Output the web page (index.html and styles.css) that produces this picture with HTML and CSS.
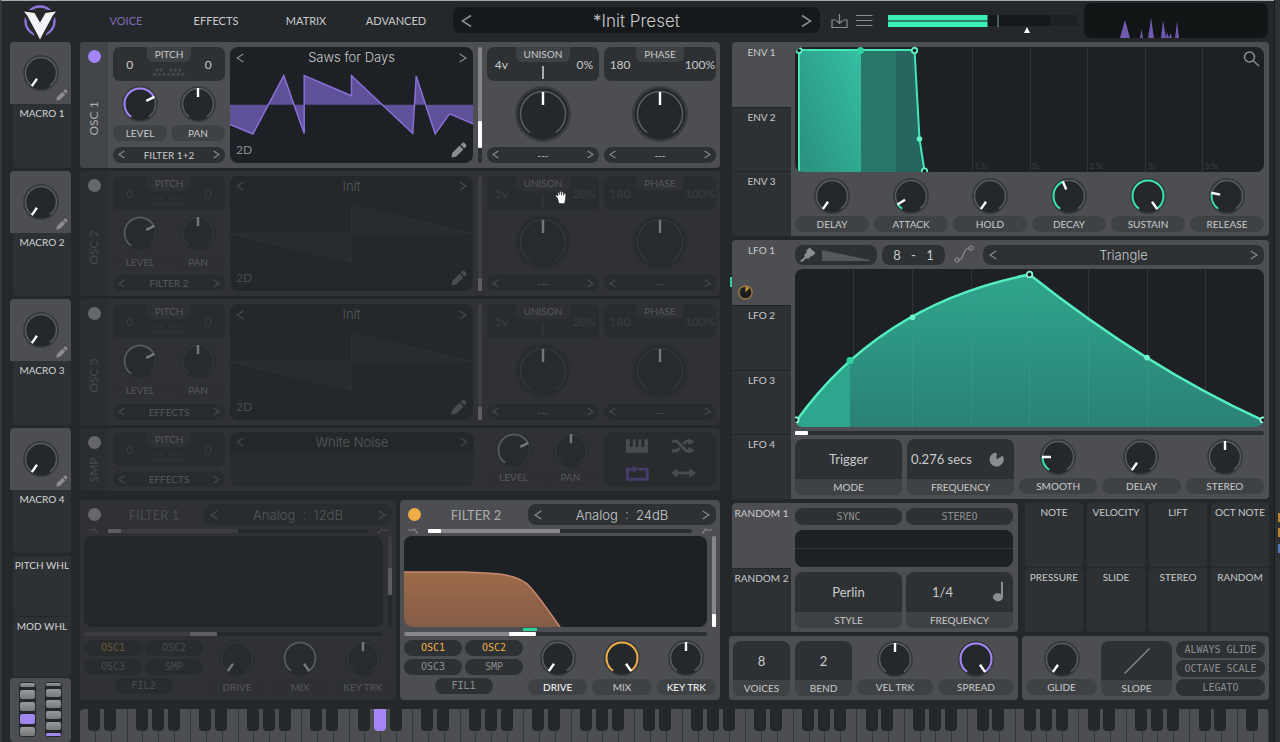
FILE: index.html
```html
<!DOCTYPE html>
<html lang="en">
<head>
<meta charset="utf-8">
<title>Synth – Init Preset</title>
<link rel="stylesheet" href="styles.css">
</head>
<body>
<svg class="defs" aria-hidden="true">
  <defs>
    <symbol id="dial" viewBox="0 0 36 36">
      <circle class="d-halo" cx="18" cy="18" r="18"/>
      <circle class="d-disc" cx="18" cy="18" r="16.500"/>
      <path class="d-ring" d="M9.100 30.700A15.500 15.500 0 1 1 26.900 30.700"/>
      <path class="d-fill" pathLength="100" d="M9.100 30.700A15.500 15.500 0 1 1 26.900 30.700"/>
      <g class="d-hand"><path d="M18 2V11"/></g>
    </symbol>
    <symbol id="dial-big" viewBox="0 0 56 56">
      <circle class="d-halo" cx="28" cy="28" r="28"/>
      <circle class="d-disc" cx="28" cy="28" r="25.500"/>
      <path class="d-ring" d="M15.100 46.400A22.500 22.500 0 1 1 40.900 46.400"/>
      <path class="d-hand-big" d="M28 6V19"/>
    </symbol>
    <symbol id="prev" viewBox="0 0 8 10"><path class="line" d="M7.300 1L1 5L7.300 9"/></symbol>
    <symbol id="next" viewBox="0 0 8 10"><path class="line" d="M.700 1L7 5L.700 9"/></symbol>
    <symbol id="pencil" viewBox="0 0 16 16"><path class="solid" d="M.500 15.500L1.200 11L8.600 3.600L12.400 7.400L5 14.800ZM9.600 2.600L11.600.800Q12.600.200 13.500 1L15 2.500Q15.800 3.500 15.200 4.400L13.400 6.400Z"/></symbol>
    <symbol id="keys" viewBox="0 0 34 9"><g class="solid"><circle cx="5" cy="2" r="1.700"/><circle cx="9" cy="2" r="1.700"/><circle cx="19" cy="2" r="1.700"/><circle cx="23.500" cy="2" r="1.700"/><circle cx="28" cy="2" r="1.700"/><circle cx="2.500" cy="6.500" r="1.700"/><circle cx="7.200" cy="6.500" r="1.700"/><circle cx="12" cy="6.500" r="1.700"/><circle cx="16.800" cy="6.500" r="1.700"/><circle cx="21.500" cy="6.500" r="1.700"/><circle cx="26.300" cy="6.500" r="1.700"/><circle cx="31" cy="6.500" r="1.700"/></g></symbol>
    <linearGradient id="env-a" x1="0" x2="1" y1=".8" y2="0"><stop offset="0" stop-color="#2b9380"/><stop offset="1" stop-color="#35bfa2"/></linearGradient>
    <linearGradient id="lfo-fill" x1="0" x2="0" y1="0" y2="1"><stop offset="0" stop-color="#2fa58c"/><stop offset="1" stop-color="#2a8175"/></linearGradient>
    <linearGradient id="filter-fill" x1="0" x2="0" y1="0" y2="1"><stop offset="0" stop-color="#9d6b48"/><stop offset="1" stop-color="#855c46"/></linearGradient>
  </defs>
</svg>

<div class="app">
  <header class="topbar">
    <svg class="logo" viewBox="0 0 36 36" role="img" aria-label="Vital">
      <circle cx="18" cy="17" r="14.500" fill="none" stroke="#8f72d8" stroke-width="2.400"/>
      <path d="M0 6H13L18 16L23 6H36L32 15L21 36H15L4 15Z" fill="#24282b"/>
      <path d="M2 7.500L12.500 9L18 18.500L23.500 9L34 7.500L30.500 12L19.500 32.500L18 35.500L16.500 32.500L5.500 12Z" fill="#f4f4f6"/>
    </svg>
    <nav class="tabs">
      <a class="tab is-active" href="#voice">VOICE</a>
      <a class="tab" href="#effects">EFFECTS</a>
      <a class="tab" href="#matrix">MATRIX</a>
      <a class="tab" href="#advanced">ADVANCED</a>
    </nav>
    <div class="preset">
      <button aria-label="Previous preset"><svg><use href="#prev"/></svg></button>
      <span>*Init Preset</span>
      <button aria-label="Next preset"><svg><use href="#next"/></svg></button>
    </div>
    <button class="icon-btn" aria-label="Save preset"><svg viewBox="0 0 17 15"><path class="line" d="M5 6H1V13.500H16V6H12M8.500 0V9.500M5.500 6.500L8.500 9.500L11.500 6.500"/></svg></button>
    <button class="icon-btn menu" aria-label="Menu"><svg viewBox="0 0 17 12"><path class="line" d="M0 1H16.500M0 6H16.500M0 11H16.500"/></svg></button>
    <div class="meter">
      <svg viewBox="0 0 190 22" preserveAspectRatio="none" aria-label="Output level">
        <path d="M0 0H162V11H0Z" fill="#14181a"/><path d="M162 0H190V11H162Z" fill="#1d2124"/>
        <path d="M0 0H99.500V5.500H0ZM0 6.500H99.500V12H0Z" fill="#3cf0b6"/>
        <path d="M110 0V12" stroke="#6fa295"/>
        <path d="M139 12L142 18H136Z" fill="#fff"/>
      </svg>
    </div>
    <svg class="spectrum" viewBox="0 0 184 35" aria-label="Spectrum">
      <path d="M36 35Q40 20 41 17Q42 20 46 35ZM56 35L57.500 26L59 35ZM64 35Q66.500 20 67 14Q68 22 70 35ZM77 35L79 17L82 35ZM82 35L83 29L85 35L86.500 30L88 35ZM91 35L93 18L95 35Z" fill="#7059ae"/>
    </svg>
  </header>

  <aside class="macros">
    <section class="macro">
      <label class="macro-top"><span class="dial" style="--v:0"><svg><use href="#dial"/></svg><input type="range" value="0" aria-label="Macro 1"></span><svg class="pencil"><use href="#pencil"/></svg></label>
      <div class="macro-name">MACRO 1</div>
    </section>
    <section class="macro">
      <label class="macro-top"><span class="dial" style="--v:0"><svg><use href="#dial"/></svg><input type="range" value="0" aria-label="Macro 2"></span><svg class="pencil"><use href="#pencil"/></svg></label>
      <div class="macro-name">MACRO 2</div>
    </section>
    <section class="macro">
      <label class="macro-top"><span class="dial" style="--v:0"><svg><use href="#dial"/></svg><input type="range" value="0" aria-label="Macro 3"></span><svg class="pencil"><use href="#pencil"/></svg></label>
      <div class="macro-name">MACRO 3</div>
    </section>
    <section class="macro">
      <label class="macro-top"><span class="dial" style="--v:0"><svg><use href="#dial"/></svg><input type="range" value="0" aria-label="Macro 4"></span><svg class="pencil"><use href="#pencil"/></svg></label>
      <div class="macro-name">MACRO 4</div>
    </section>
    <div class="wheel-name">PITCH WHL</div>
    <div class="wheel-name">MOD WHL</div>
    <div class="wheels">
      <div class="wheel"><i class="w1"></i><i class="w2"></i><i class="w2"></i><i class="w2 lit"></i><i class="w2"></i></div>
      <div class="wheel"><i class="w1"></i><i class="w2"></i><i class="w2"></i><i class="w2"></i><i class="w2"></i><i class="w1 lit"></i></div>
    </div>
  </aside>

  <main class="work">
    <div class="voice">
      <div class="oscs">
        <section class="osc">
          <header class="osc-head"><button class="power" aria-label="Oscillator 1 on" aria-pressed="true"></button><h2>OSC 1</h2></header>
          <div class="osc-col">
            <div class="duo"><span>0</span><b>PITCH</b><span>0</span><svg class="keys"><use href="#keys"/></svg></div>
            <div class="pair">
              <label class="knob"><span class="dial" style="--v:72;--f:72"><svg><use href="#dial"/></svg><input type="range" value="72"></span><span class="cap">LEVEL</span></label>
              <label class="knob"><span class="dial" style="--v:50"><svg><use href="#dial"/></svg><input type="range" value="50"></span><span class="cap">PAN</span></label>
            </div>
            <div class="picker"><button aria-label="Previous"><svg><use href="#prev"/></svg></button><span>FILTER 1+2</span><button aria-label="Next"><svg><use href="#next"/></svg></button></div>
          </div>
          <div class="wave">
            <svg class="plot" viewBox="0 0 244 115" preserveAspectRatio="none">
              <path d="M0 57.500V77L23 86.500L54 28.500L74.500 86V28.500L122 48.500V28.500L183.500 86L187 29L206 86.500L220.500 66.500L244 76.500V57.500Z" fill="#5f509a"/>
              <path d="M0 77L23 86.500L54 28.500L74.500 86V28.500L122 48.500V28.500L183.500 86L187 29L206 86.500L220.500 66.500L244 76.500" fill="none" stroke="#8a70d6" stroke-width="1.500"/>
            </svg>
            <div class="wave-title"><button aria-label="Previous wavetable"><svg><use href="#prev"/></svg></button><span>Saws for Days</span><button aria-label="Next wavetable"><svg><use href="#next"/></svg></button></div>
            <div class="wave-foot"><button>2D</button><button aria-label="Edit wavetable"><svg class="edit"><use href="#pencil"/></svg></button></div>
          </div>
          <input class="vslider long" type="range" value="17" style="--p:75%" aria-label="Wave frame">
          <div class="osc-col">
            <div class="duo"><span>4v</span><b>UNISON</b><span>0%</span><i class="tick"></i></div>
            <span class="dial big"><svg><use href="#dial-big"/></svg><input type="range" value="50" aria-label="Unison morph"></span>
            <div class="picker"><button aria-label="Previous"><svg><use href="#prev"/></svg></button><span>---</span><button aria-label="Next"><svg><use href="#next"/></svg></button></div>
          </div>
          <div class="osc-col">
            <div class="duo"><span>180</span><b>PHASE</b><span>100%</span></div>
            <span class="dial big"><svg><use href="#dial-big"/></svg><input type="range" value="50" aria-label="Phase morph"></span>
            <div class="picker"><button aria-label="Previous"><svg><use href="#prev"/></svg></button><span>---</span><button aria-label="Next"><svg><use href="#next"/></svg></button></div>
          </div>
        </section>

        <section class="osc off">
          <header class="osc-head"><button class="power" aria-label="Oscillator 2 on" aria-pressed="false"></button><h2>OSC 2</h2></header>
          <div class="osc-col">
            <div class="duo"><span>0</span><b>PITCH</b><span>0</span><svg class="keys"><use href="#keys"/></svg></div>
            <div class="pair">
              <label class="knob"><span class="dial" style="--v:72;--f:72"><svg><use href="#dial"/></svg><input type="range" value="72"></span><span class="cap">LEVEL</span></label>
              <label class="knob"><span class="dial" style="--v:50"><svg><use href="#dial"/></svg><input type="range" value="50"></span><span class="cap">PAN</span></label>
            </div>
            <div class="picker"><button aria-label="Previous"><svg><use href="#prev"/></svg></button><span>FILTER 2</span><button aria-label="Next"><svg><use href="#next"/></svg></button></div>
          </div>
          <div class="wave">
            <svg class="plot" viewBox="0 0 244 115" preserveAspectRatio="none"><path d="M0 57.500L122 86V29L244 57.500Z" fill="#282c2f" stroke="#2d3033"/></svg>
            <div class="wave-title"><button aria-label="Previous wavetable"><svg><use href="#prev"/></svg></button><span>Init</span><button aria-label="Next wavetable"><svg><use href="#next"/></svg></button></div>
            <div class="wave-foot"><button>2D</button><button aria-label="Edit wavetable"><svg class="edit"><use href="#pencil"/></svg></button></div>
          </div>
          <input class="vslider" type="range" value="0" style="--p:95%" aria-label="Wave frame">
          <div class="osc-col">
            <div class="duo"><span>1v</span><b>UNISON</b><span>20%</span><i class="tick"></i>
              <svg class="grab" viewBox="0 0 12 13"><path d="M2.500 7L1 5.500Q.200 4.700.900 4.200Q1.600 3.800 3 5V2.200Q3 1.300 3.700 1.300Q4.400 1.300 4.500 2.200L4.700 4V1.200Q4.700.300 5.500.300Q6.300.300 6.400 1.200L6.500 4L7 1.500Q7.200.700 8 .900Q8.700 1 8.600 2L8.400 4.500L9.300 2.800Q9.900 2.100 10.500 2.500Q11 2.900 10.800 3.800L10.300 9L9.500 12.500H4Z" fill="#fff" stroke="#222" stroke-width=".500"/></svg>
            </div>
            <span class="dial big"><svg><use href="#dial-big"/></svg><input type="range" value="50" aria-label="Unison morph"></span>
            <div class="picker"><button aria-label="Previous"><svg><use href="#prev"/></svg></button><span>---</span><button aria-label="Next"><svg><use href="#next"/></svg></button></div>
          </div>
          <div class="osc-col">
            <div class="duo"><span>180</span><b>PHASE</b><span>100%</span></div>
            <span class="dial big"><svg><use href="#dial-big"/></svg><input type="range" value="50" aria-label="Phase morph"></span>
            <div class="picker"><button aria-label="Previous"><svg><use href="#prev"/></svg></button><span>---</span><button aria-label="Next"><svg><use href="#next"/></svg></button></div>
          </div>
        </section>

        <section class="osc off">
          <header class="osc-head"><button class="power" aria-label="Oscillator 3 on" aria-pressed="false"></button><h2>OSC 3</h2></header>
          <div class="osc-col">
            <div class="duo"><span>0</span><b>PITCH</b><span>0</span><svg class="keys"><use href="#keys"/></svg></div>
            <div class="pair">
              <label class="knob"><span class="dial" style="--v:72;--f:72"><svg><use href="#dial"/></svg><input type="range" value="72"></span><span class="cap">LEVEL</span></label>
              <label class="knob"><span class="dial" style="--v:50"><svg><use href="#dial"/></svg><input type="range" value="50"></span><span class="cap">PAN</span></label>
            </div>
            <div class="picker"><button aria-label="Previous"><svg><use href="#prev"/></svg></button><span>EFFECTS</span><button aria-label="Next"><svg><use href="#next"/></svg></button></div>
          </div>
          <div class="wave">
            <svg class="plot" viewBox="0 0 244 115" preserveAspectRatio="none"><path d="M0 57.500L122 86V29L244 57.500Z" fill="#282c2f" stroke="#2d3033"/></svg>
            <div class="wave-title"><button aria-label="Previous wavetable"><svg><use href="#prev"/></svg></button><span>Init</span><button aria-label="Next wavetable"><svg><use href="#next"/></svg></button></div>
            <div class="wave-foot"><button>2D</button><button aria-label="Edit wavetable"><svg class="edit"><use href="#pencil"/></svg></button></div>
          </div>
          <input class="vslider" type="range" value="0" style="--p:95%" aria-label="Wave frame">
          <div class="osc-col">
            <div class="duo"><span>1v</span><b>UNISON</b><span>20%</span><i class="tick"></i></div>
            <span class="dial big"><svg><use href="#dial-big"/></svg><input type="range" value="50" aria-label="Unison morph"></span>
            <div class="picker"><button aria-label="Previous"><svg><use href="#prev"/></svg></button><span>---</span><button aria-label="Next"><svg><use href="#next"/></svg></button></div>
          </div>
          <div class="osc-col">
            <div class="duo"><span>180</span><b>PHASE</b><span>100%</span></div>
            <span class="dial big"><svg><use href="#dial-big"/></svg><input type="range" value="50" aria-label="Phase morph"></span>
            <div class="picker"><button aria-label="Previous"><svg><use href="#prev"/></svg></button><span>---</span><button aria-label="Next"><svg><use href="#next"/></svg></button></div>
          </div>
        </section>

        <section class="osc smp off">
          <header class="osc-head"><button class="power" aria-label="Sampler on" aria-pressed="false"></button><h2>SMP</h2></header>
          <div class="osc-col">
            <div class="duo"><span>0</span><b>PITCH</b><span>0</span><svg class="keys"><use href="#keys"/></svg></div>
            <div class="picker"><button aria-label="Previous"><svg><use href="#prev"/></svg></button><span>EFFECTS</span><button aria-label="Next"><svg><use href="#next"/></svg></button></div>
          </div>
          <div class="wave noise">
            <div class="wave-title"><button aria-label="Previous sample"><svg><use href="#prev"/></svg></button><span>White Noise</span><button aria-label="Next sample"><svg><use href="#next"/></svg></button></div>
          </div>
          <div class="pair smp-knobs">
            <label class="knob"><span class="dial" style="--v:72;--f:72"><svg><use href="#dial"/></svg><input type="range" value="72"></span><span class="cap">LEVEL</span></label>
            <label class="knob"><span class="dial" style="--v:50"><svg><use href="#dial"/></svg><input type="range" value="50"></span><span class="cap">PAN</span></label>
          </div>
          <div class="smp-modes">
            <button aria-label="Key track"><svg viewBox="0 0 26 16"><path class="solid" d="M1 1H5V9H8V1H11V9H14V1H17V9H20V1H24V15H1Z"/></svg></button>
            <button aria-label="Random phase"><svg viewBox="0 0 26 16"><path class="thick" d="M1 3H6L16 13H20M1 13H6L9 10M13 6L16 3H20"/><path class="solid" d="M18 0L25 3.500L18 7ZM18 9L25 12.500L18 16Z"/></svg></button>
            <button aria-label="Loop" aria-pressed="true"><svg viewBox="0 0 26 16"><path class="thick" d="M8 4H2.500V14.500H23V4H14"/><path class="solid" d="M8 0L14 4L8 8Z"/></svg></button>
            <button aria-label="Bounce"><svg viewBox="0 0 26 16"><path class="thick" d="M4 8H22"/><path class="solid" d="M7 3V13L0 8ZM19 3V13L26 8Z"/></svg></button>
          </div>
        </section>
      </div>

      <div class="filters">
        <section class="filter off">
          <header class="filter-head"><button class="power" aria-label="Filter 1 on" aria-pressed="false"></button><h2>FILTER 1</h2>
            <div class="picker wide"><button aria-label="Previous model"><svg><use href="#prev"/></svg></button><span>Analog&nbsp; :&nbsp; 12dB</span><button aria-label="Next model"><svg><use href="#next"/></svg></button></div>
          </header>
          <div class="blend"><svg viewBox="0 0 10 6"><path class="line" d="M0 2H5L6.500 1L9.500 5.500"/></svg><input class="hslider" type="range" value="0" style="--p:50%" aria-label="Blend"><svg viewBox="0 0 10 6"><path class="line" d="M10 2H5L3.500 1L.500 5.500"/></svg></div>
          <div class="response"><div class="screen"></div><input class="vslider fat mid" type="range" value="50" style="--p:45%" aria-label="Resonance"></div>
          <div class="cutoff"><input class="hslider cut" type="range" value="39" style="--p:40%" aria-label="Cutoff"></div>
          <div class="filter-foot">
            <div class="routes"><button aria-pressed="true">OSC1</button><button>OSC2</button><button>OSC3</button><button>SMP</button><button>FIL2</button></div>
            <label class="knob"><span class="dial" style="--v:0"><svg><use href="#dial"/></svg><input type="range" value="0"></span><span class="cap">DRIVE</span></label>
            <label class="knob"><span class="dial" style="--v:100;--f:100"><svg><use href="#dial"/></svg><input type="range" value="100"></span><span class="cap">MIX</span></label>
            <label class="knob"><span class="dial" style="--v:50"><svg><use href="#dial"/></svg><input type="range" value="50"></span><span class="cap">KEY TRK</span></label>
          </div>
        </section>
        <section class="filter">
          <header class="filter-head"><button class="power" aria-label="Filter 2 on" aria-pressed="true"></button><h2>FILTER 2</h2>
            <div class="picker wide"><button aria-label="Previous model"><svg><use href="#prev"/></svg></button><span>Analog&nbsp; :&nbsp; 24dB</span><button aria-label="Next model"><svg><use href="#next"/></svg></button></div>
          </header>
          <div class="blend"><svg viewBox="0 0 10 6"><path class="line" d="M0 2H5L6.500 1L9.500 5.500"/></svg><input class="hslider" type="range" value="0" style="--p:50%" aria-label="Blend"><svg viewBox="0 0 10 6"><path class="line" d="M10 2H5L3.500 1L.500 5.500"/></svg></div>
          <div class="response">
            <div class="screen"><svg class="plot" viewBox="0 0 303 91" preserveAspectRatio="none">
              <path d="M0 36H60C90 37 108 37 122.700 47.500C132 56 142 71 156 91H0Z" fill="url(#filter-fill)"/>
              <path d="M0 36H60C90 37 108 37 122.700 47.500C132 56 142 71 156 91" fill="none" stroke="#c98a72" stroke-width="1.500"/></svg></div>
            <input class="vslider fat" type="range" value="0" style="--p:90%" aria-label="Resonance">
          </div>
          <div class="cutoff"><input class="hslider cut" type="range" value="38" style="--p:38%" aria-label="Cutoff"><i class="mod-mark"></i></div>
          <div class="filter-foot">
            <div class="routes"><button aria-pressed="true">OSC1</button><button aria-pressed="true">OSC2</button><button>OSC3</button><button>SMP</button><button>FIL1</button></div>
            <label class="knob strong"><span class="dial" style="--v:0"><svg><use href="#dial"/></svg><input type="range" value="0"></span><span class="cap">DRIVE</span></label>
            <label class="knob"><span class="dial amber" style="--v:100;--f:100"><svg><use href="#dial"/></svg><input type="range" value="100"></span><span class="cap">MIX</span></label>
            <label class="knob strong"><span class="dial" style="--v:50"><svg><use href="#dial"/></svg><input type="range" value="50"></span><span class="cap">KEY TRK</span></label>
          </div>
        </section>
      </div>
    </div>

    <div class="mods">
      <section class="mod env">
        <nav class="mod-tabs"><button class="is-active">ENV 1</button><button>ENV 2</button><button>ENV 3</button></nav>
        <div class="mod-body">
          <div class="screen">
            <svg class="plot" viewBox="0 0 469 125" preserveAspectRatio="none">
              <path d="M177.500 0V125M235.500 0V125M292.500 0V125M350.500 0V125M407.500 0V125" stroke="#303437"/>
              <path d="M4 3H66V125H4Z" fill="url(#env-a)"/><path d="M66 3H101V125H66Z" fill="#287769"/><path d="M101 3H119.500L124.500 92L129.500 125H101Z" fill="#27665e"/>
              <path d="M4 125V3H119.500L124.500 92L129.500 124" fill="none" stroke="#45e6b8" stroke-width="2"/>
              <g fill="#15191b" stroke="#62f3c8" stroke-width="1.800"><circle cx="4" cy="3.500" r="2.700"/><circle cx="119.500" cy="3.500" r="2.700"/><circle cx="129.500" cy="124" r="2.700"/></g>
              <circle cx="65.500" cy="3.500" r="3.500" fill="#2ed3a2"/><circle cx="124.500" cy="92" r="2.800" fill="#62f3c8"/>
              <g class="ticks"><text x="180" y="122">1.5s</text><text x="237" y="122">2s</text><text x="295" y="122">2.5s</text><text x="353" y="122">3s</text><text x="410" y="122">3.5s</text></g>
              <g fill="none" stroke="#8b8e90" stroke-width="1.500"><circle cx="454.500" cy="10" r="5"/><path d="M458 13.500L464 19"/></g>
            </svg>
          </div>
          <div class="knob-row six">
            <label class="knob"><span class="dial" style="--v:0"><svg><use href="#dial"/></svg><input type="range" value="0"></span><span class="cap">DELAY</span></label>
            <label class="knob"><span class="dial mint" style="--v:8;--f:8"><svg><use href="#dial"/></svg><input type="range" value="8"></span><span class="cap">ATTACK</span></label>
            <label class="knob"><span class="dial" style="--v:0"><svg><use href="#dial"/></svg><input type="range" value="0"></span><span class="cap">HOLD</span></label>
            <label class="knob"><span class="dial mint" style="--v:42;--f:42"><svg><use href="#dial"/></svg><input type="range" value="42"></span><span class="cap">DECAY</span></label>
            <label class="knob"><span class="dial mint" style="--v:100;--f:100"><svg><use href="#dial"/></svg><input type="range" value="100"></span><span class="cap">SUSTAIN</span></label>
            <label class="knob"><span class="dial mint" style="--v:23;--f:23"><svg><use href="#dial"/></svg><input type="range" value="23"></span><span class="cap">RELEASE</span></label>
          </div>
        </div>
      </section>

      <section class="mod lfo">
        <nav class="mod-tabs"><button class="is-active">LFO 1<svg class="amount" viewBox="0 0 16 16"><circle cx="8" cy="8" r="7" fill="#1b1e20" stroke="#9a7a3c" stroke-width="1.500"/><path d="M8 8V2A6 6 0 0 1 12 3.500Z" fill="#c8923a"/></svg></button><button>LFO 2</button><button>LFO 3</button><button>LFO 4</button></nav>
        <i class="activity"></i>
        <div class="mod-body">
          <div class="lfo-tools">
            <button class="tool brush" aria-label="Paint"><svg viewBox="0 0 72 16"><path class="solid" d="M0 14L5 9.500L4 8L7 5L6 4L9.500 .500L15.500 6L12 9.500L11 9L8 12L6.500 11L2 15Z"/><path d="M22 3L70 13V14H22Z" fill="#54585b"/></svg></button>
            <div class="tool grid-size"><span>8</span><span>-</span><span>1</span></div>
            <button class="smooth-btn" aria-label="Smooth"><svg viewBox="0 0 20 18"><path class="line" d="M4.500 15C11 15 8 3 15 3"/><circle class="line" cx="3" cy="15" r="2"/><circle class="line" cx="17" cy="3" r="2"/></svg></button>
            <div class="picker wide"><button aria-label="Previous shape"><svg><use href="#prev"/></svg></button><span>Triangle</span><button aria-label="Next shape"><svg><use href="#next"/></svg></button></div>
          </div>
          <div class="screen">
            <svg class="plot" viewBox="0 0 469 157" preserveAspectRatio="none">
              <path d="M58.500 0V157M117.500 0V157M176.500 0V157M234.500 0V157M293.500 0V157M352.500 0V157M410.500 0V157" stroke="#303437"/>
              <path d="M2 150C60 70 140 24 234.500 5.500Q352 98 467 150V157H2Z" fill="url(#lfo-fill)"/>
              <path d="M2 150Q27 115 55 91V157H2Z" fill="#2ea68d"/>
              <path d="M117.500 50V157M176.500 25V157M234.500 8V157M293.500 52V157M352.500 90V157" stroke="#3a9c8b" stroke-opacity=".500"/>
              <path d="M2 150C60 70 140 24 234.500 5.500Q352 98 467 150" fill="none" stroke="#56edc0" stroke-width="2.500"/>
              <g fill="#15191b" stroke="#8ff7da" stroke-width="1.800"><circle cx="234.500" cy="5.500" r="2.800"/><circle cx="1" cy="150" r="2.600"/><circle cx="468" cy="150" r="2.600"/></g>
              <circle cx="55" cy="91" r="3.500" fill="#2ed3a2"/><g fill="#6ff5cd"><circle cx="117.500" cy="48" r="2.800"/><circle cx="352" cy="88" r="2.800"/></g>
            </svg>
          </div>
          <input class="hslider flat" type="range" value="0" style="--p:0%" aria-label="Phase">
          <div class="lfo-foot">
            <button class="tile"><span>Trigger</span><small>MODE</small></button>
            <button class="tile split"><span>0.276 secs<svg class="clock" viewBox="0 0 16 16"><path class="solid" d="M8 8V.500A7.500 7.500 0 1 0 14.500 4Z"/></svg></span><small>FREQUENCY</small></button>
            <label class="knob"><span class="dial mint" style="--v:19;--f:19"><svg><use href="#dial"/></svg><input type="range" value="19"></span><span class="cap">SMOOTH</span></label>
            <label class="knob"><span class="dial" style="--v:0"><svg><use href="#dial"/></svg><input type="range" value="0"></span><span class="cap">DELAY</span></label>
            <label class="knob"><span class="dial" style="--v:50"><svg><use href="#dial"/></svg><input type="range" value="50"></span><span class="cap">STEREO</span></label>
          </div>
        </div>
      </section>

      <div class="split-row">
        <section class="mod random">
          <nav class="mod-tabs"><button class="is-active">RANDOM 1</button><button>RANDOM 2</button></nav>
          <div class="mod-body">
            <div class="two"><button class="pill">SYNC</button><button class="pill">STEREO</button></div>
            <div class="screen trace"></div>
            <div class="two">
              <button class="tile"><span>Perlin</span><small>STYLE</small></button>
              <button class="tile split beat"><span>1/4<svg class="note" viewBox="0 0 10 20"><path class="solid" d="M8 0H10V15A5 4 0 1 1 8 12Z"/></svg></span><small>FREQUENCY</small></button>
            </div>
          </div>
        </section>
        <div class="sources">
          <button>NOTE</button><button>VELOCITY</button><button>LIFT</button><button>OCT NOTE</button>
          <button>PRESSURE</button><button>SLIDE</button><button>STEREO</button><button>RANDOM</button>
        </div>
      </div>

      <div class="split-row">
        <section class="panel voices">
          <button class="tile"><span>8</span><small>VOICES</small></button>
          <button class="tile"><span>2</span><small>BEND</small></button>
          <label class="knob"><span class="dial" style="--v:50"><svg><use href="#dial"/></svg><input type="range" value="50"></span><span class="cap">VEL TRK</span></label>
          <label class="knob"><span class="dial" style="--v:100;--f:100"><svg><use href="#dial"/></svg><input type="range" value="100"></span><span class="cap">SPREAD</span></label>
        </section>
        <section class="panel glide">
          <label class="knob"><span class="dial" style="--v:0"><svg><use href="#dial"/></svg><input type="range" value="0"></span><span class="cap">GLIDE</span></label>
          <button class="tile"><span><svg class="slope" viewBox="0 0 26 26"><path class="line" d="M.500 25.500L25.500.500"/></svg></span><small>SLOPE</small></button>
          <div class="stack"><button class="pill">ALWAYS GLIDE</button><button class="pill">OCTAVE SCALE</button><button class="pill">LEGATO</button></div>
        </section>
      </div>
    </div>
    <div class="keyboard" aria-label="Keyboard"></div>
  </main>
</div>
<div class="edge"></div>
<script src="keyboard.js"></script>
</body>
</html>
```

FILE: keyboard.js
```js
// Builds the 128-note keyboard: 75 white keys, black keys overlap the white key to their left.
const board = document.querySelector('.keyboard');
const hasSharp = [true, true, false, true, true, true, false];
const WHITE_KEYS = 75;
const HELD_SHARP = 18;

for (let i = 0; i < WHITE_KEYS; i++) {
  const slot = document.createElement('div');
  slot.className = 'slot';
  const white = document.createElement('button');
  white.className = 'white';
  white.setAttribute('aria-label', 'Key ' + (i + 1));
  slot.append(white);
  if (hasSharp[i % 7] && i < WHITE_KEYS - 1) {
    const black = document.createElement('button');
    black.className = 'black' + (i === HELD_SHARP ? ' held' : '');
    black.setAttribute('aria-label', 'Key ' + (i + 1) + ' sharp');
    slot.append(black);
  }
  board.append(slot);
}
```

FILE: styles.css
```css
:root {
  --bg: #24282b;
  --panel: #4d4e52;
  --strip: #414448;
  --box: #2d3134;
  --cap: #3f4245;
  --screen: #1d2125;
  --text: #c9cacb;
  --soft: #a9abad;
  --icon: #8b8d8f;
  --value: #c9cacb;
  --faint: #45484b;
  --ring: #5b5e61;
  --disc: #24282b;
  --halo: #393b3f;
  --hand: #ffffff;
  --accent: #a585f7;
  --amber: #f0ad45;
  --track: #2c2f32;
  --track-on: #86878a;
  --thumb: #ffffff;
}

* { box-sizing: border-box; }

body {
  margin: 0;
  min-height: 100vh;
  display: flex;
  background: var(--bg);
  color: var(--text);
  font: 10px/14px Lato, "Liberation Sans", sans-serif;
  overflow-x: hidden;
}

button {
  padding: 0;
  border: 0;
  background: none;
  color: inherit;
  font: inherit;
}
a { color: inherit; text-decoration: none; }
h2 { margin: 0; font-weight: 400; }
svg { display: block; }
.defs { position: absolute; width: 0; height: 0; }
.line { fill: none; stroke: var(--icon); stroke-width: 1.2; }
.thick { fill: none; stroke: var(--icon); stroke-width: 3; }
.solid { fill: var(--icon); }

.app {
  flex: 1;
  min-width: 0;
  display: grid;
  grid-template-columns: 61px minmax(0, 1fr);
  grid-template-rows: 41px 1fr;
  column-gap: 9px;
  padding: 0 5px 0 8px;
  border-top: 1px solid #a7aaad;
  border-left: 2px solid #34383b;
}
.edge {
  width: 6px;
  border-left: 1px solid #16191b;
  background:
    linear-gradient(#b98432, #b98432) 3px 513px / 3px 9px no-repeat,
    linear-gradient(#b98432, #b98432) 3px 528px / 3px 9px no-repeat,
    linear-gradient(#5878b8, #5878b8) 3px 544px / 3px 9px no-repeat,
    #2e3134;
}

/* Top bar */
.topbar {
  grid-column: 1 / -1;
  display: flex;
  align-items: flex-start;
}
.logo { width: 36px; height: 36px; margin: 3px 0 0 12px; }
.tabs { display: grid; grid-template-columns: repeat(4, 90px); margin-left: 23px; }
.tab { line-height: 40px; font-size: 11px; text-align: center; }
.tab.is-active { color: #8068b8; }
.preset {
  flex: 1;
  height: 26px;
  margin: 6px 11px 0 12px;
  padding: 2px 8px 0;
  display: flex;
  align-items: center;
  justify-content: space-between;
  border-radius: 7px;
  background: #15191b;
  font: 300 17px/24px Inter, sans-serif;
}
.preset svg { width: 11px; height: 14px; }
.icon-btn { width: 17px; margin-top: 13px; }
.icon-btn svg { width: 17px; height: 15px; }
.icon-btn.menu { margin-left: 8px; }
.icon-btn.menu svg { height: 13px; }
.meter { width: 190px; margin: 14px 6px 0 15px; }
.meter svg { width: 100%; height: 22px; }
.spectrum { width: 184px; height: 35px; margin-top: 2px; margin-right: 1px; background: #121516; border-radius: 7px; }

/* Dials */
.dial { position: relative; width: 36px; height: 36px; --f: 0; }
.dial svg { width: 100%; height: 100%; overflow: visible; }
.dial input { position: absolute; inset: 0; width: 100%; height: 100%; margin: 0; opacity: 0; }
.dial.big { width: 56px; height: 56px; align-self: center; }
.dial.mint { --accent: #35e6ac; }
.dial.amber { --accent: #f0ad45; }
.d-halo { fill: var(--halo); }
.d-disc { fill: var(--disc); }
.d-ring { fill: none; stroke: var(--ring); stroke-width: 1.5; }
.d-fill { fill: none; stroke: var(--accent); stroke-width: 2; stroke-dasharray: var(--f) 200; }
.d-hand { transform-origin: 18px 18px; transform: rotate(calc(-145deg + 2.9deg * var(--v))); }
.d-hand path, .d-hand-big { stroke: var(--hand); stroke-width: 2.4; }
.knob { display: flex; flex-direction: column; align-items: center; gap: 3px; min-width: 0; }
.cap { align-self: stretch; height: 16px; border-radius: 8px; background: var(--cap); line-height: 16px; text-align: center; white-space: nowrap; }
.knob.strong .cap { color: #fff; }

/* Macros */
.macros { display: flex; flex-direction: column; }
.macro {
  flex: 1;
  display: flex;
  flex-direction: column;
  margin-bottom: 3px;
}
.macro-top {
  position: relative;
  height: 62px;
  display: grid;
  place-items: center;
  border-radius: 4px 4px 0 0;
  background: var(--panel);
}
.pencil { position: absolute; right: 3px; bottom: 3px; width: 12px; height: 12px; }
.macro-name, .wheel-name {
  flex: 1;
  margin-left: 3px;
  padding-top: 2px;
  border-radius: 0 0 4px 4px;
  background: var(--box);
  text-align: center;
  white-space: nowrap;
  color: #d4d5d6;
}
.wheel-name { flex: 0 0 60px; margin-bottom: 1px; }
.wheels {
  height: 64px;
  padding: 4px 9px 5px;
  display: flex;
  justify-content: space-between;
  border-radius: 4px;
  background: var(--panel);
}
.wheel {
  width: 17px;
  display: flex;
  flex-direction: column;
  gap: 3px;
  padding: 1px;
  overflow: hidden;
  border-radius: 4px;
  background: var(--bg);
}
.wheel i { border-radius: 2px; background: linear-gradient(#97999b, #77797b); }
.w1 { flex: 4; }
.w2 { flex: 10; }
.wheel i.lit { background: #a186ee; }

/* Workspace */
.work {
  display: grid;
  grid-template-columns: minmax(0, 32fr) minmax(0, 27fr);
  grid-template-rows: 1fr 33px;
  gap: 9px;
}
.voice, .oscs, .mods { display: flex; flex-direction: column; }
.voice { gap: 9px; }
.oscs { flex: 1; gap: 3px; }

.off {
  --panel: #303134;
  --strip: #2a2e30;
  --box: #282c2f;
  --cap: #2e3033;
  --screen: #24282b;
  --text: #56585a;
  --soft: #484b4d;
  --value: #3b3e41;
  --icon: #494b4e;
  --faint: #303335;
  --ring: #33363a;
  --disc: #282b2e;
  --halo: #2c2e31;
  --hand: #75777a;
  --accent: #55585b;
  --amber: #6c5833;
  --track: #26292c;
  --track-on: #3b3d40;
  --thumb: #5c5e61;
  color: var(--text);
}

.osc {
  flex: 125;
  min-height: 0;
  display: grid;
  grid-template-columns: 28px 112px minmax(0, 1fr) 4px 112px 112px;
  column-gap: 5px;
  padding-right: 4px;
  border-radius: 4px;
  background: var(--panel);
}
.osc > * { margin: 5px 0; }
.osc .osc-head {
  margin: 0;
  padding: 8px 0 0;
  display: flex;
  flex-direction: column;
  align-items: center;
  border-radius: 4px 0 0 4px;
  background: var(--strip);
}
.power { width: 13px; height: 13px; border-radius: 50%; background: var(--accent); flex: none; }
.off .power { background: #65676a; }
.osc-head h2 {
  flex: 1;
  padding-bottom: 6px;
  display: flex;
  align-items: center;
  justify-content: center;
  writing-mode: vertical-rl;
  transform: rotate(180deg);
  font-size: 12px;
  color: var(--soft);
}
.osc-col { display: flex; flex-direction: column; justify-content: space-between; min-width: 0; }
.duo {
  position: relative;
  height: 34px;
  display: grid;
  grid-template-columns: 1fr auto 1fr;
  border-radius: 7px;
  background: var(--box);
  font-size: 12px;
  line-height: 36px;
  text-align: center;
}
.duo > span { color: var(--value); }
.duo b {
  height: 15px;
  padding: 0 8px;
  border-radius: 0 0 6px 6px;
  background: var(--cap);
  color: var(--text);
  font: 400 10px/15px Lato, sans-serif;
}
.keys { position: absolute; left: 39px; top: 21px; width: 34px; height: 9px; --icon: var(--faint); }
.tick { position: absolute; left: 55px; top: 19px; width: 2px; height: 13px; background: var(--hand); opacity: .6; }
.off .tick { opacity: .1; }
.grab { position: absolute; left: 68px; top: 15px; width: 12px; height: 13px; z-index: 1; }
.pair { display: grid; grid-template-columns: 1fr 1fr; gap: 4px; }
.picker {
  height: 16px;
  padding: 0 5px;
  display: flex;
  align-items: center;
  justify-content: space-between;
  border-radius: 8px;
  background: var(--box);
  white-space: nowrap;
}
.picker svg { width: 7px; height: 9px; }
.picker.wide { height: 20px; padding: 0 6px; border-radius: 8px; font: 300 13px/20px Inter, sans-serif; }
.picker.wide svg, .wave-title svg { width: 8px; height: 10px; }
.wave {
  position: relative;
  display: flex;
  flex-direction: column;
  justify-content: space-between;
  overflow: hidden;
  border-radius: 8px;
  background: var(--screen);
}
.plot { position: absolute; inset: 0; width: 100%; height: 100%; }
.wave-title, .wave-foot { position: relative; display: flex; align-items: center; justify-content: space-between; padding: 0 6px; }
.wave-title { height: 21px; font: 300 13px/21px Inter, sans-serif; }
.wave-foot { height: 26px; font-size: 12px; color: var(--icon); }
.edit { width: 16px; height: 16px; }
.smp { flex: 63; grid-template-columns: 28px 112px minmax(0, 1fr) 120px 112px; }
.smp > * { margin: 4px 0; }
.smp .osc-head h2 { padding: 0; }
.noise { background: linear-gradient(var(--screen) 21px, #292c2f 21px); }
.smp-knobs { padding-left: 6px; gap: 0; }
.smp-knobs .knob { gap: 1px; }
.smp-modes {
  display: grid;
  grid-template-columns: 1fr 1fr;
  place-items: center;
  padding: 0 10px;
  border-radius: 8px;
  background: var(--box);
}
.smp-modes svg { width: 25px; height: 16px; }
.smp-modes [aria-pressed] { --icon: #453c68; }

/* Sliders */
.hslider, .vslider { appearance: none; margin: 0; padding: 0; border-radius: 2px; min-width: 0; }
.hslider { width: 100%; height: 4px; background: linear-gradient(90deg, var(--track-on) var(--p), var(--track) var(--p)); }
.vslider { writing-mode: vertical-lr; direction: rtl; width: 4px; height: 0; min-height: 100%; background: linear-gradient(var(--track-on) var(--p), var(--track) var(--p)); }
.osc .vslider { margin: 5px 0; min-height: calc(100% - 10px); }
.hslider::-webkit-slider-thumb { appearance: none; width: 13px; height: 4px; border-radius: 1px; background: var(--thumb); }
.vslider::-webkit-slider-thumb { appearance: none; width: 4px; height: 13px; border-radius: 1px; background: var(--thumb); }
.vslider.long::-webkit-slider-thumb, .vslider.mid::-webkit-slider-thumb { height: 27px; }
.hslider.cut::-webkit-slider-thumb { width: 27px; }

/* Filters */
.filters { display: grid; grid-template-columns: 316fr 320fr; grid-template-rows: 100%; gap: 4px; height: 200px; }
.filter {
  display: flex;
  flex-direction: column;
  padding: 4px;
  border-radius: 4px;
  background: var(--panel);
  min-width: 0;
}
.filter .power { background: var(--amber); }
.filter.off .power { background: #65676a; }
.filter-head { display: grid; grid-template-columns: 20px 1fr 188px; align-items: center; }
.filter-head .power { margin-left: 4px; }
.filter-head h2 { font-size: 13px; text-align: center; color: var(--soft); }
.filter-head .picker { height: 21px; }
.blend { display: grid; grid-template-columns: 10px 1fr 10px; gap: 10px; align-items: center; padding: 0 4px; height: 11px; }
.blend svg { width: 10px; height: 6px; }
.response { flex: 1; min-height: 0; display: grid; grid-template-columns: minmax(0, 1fr) 4px; gap: 5px; }
.screen { position: relative; overflow: hidden; border-radius: 8px; background: var(--screen); }
.cutoff { position: relative; display: flex; align-items: center; height: 13px; padding-right: 9px; }
.mod-mark { position: absolute; left: 38%; top: 1px; width: 14px; height: 3px; background: #2ed39c; }
.filter-foot { display: grid; grid-template-columns: 119px 1fr 1fr 1fr; gap: 5px; height: 56px; align-items: start; }
.routes { display: grid; grid-template-columns: 1fr 1fr; gap: 3px; }
.routes button {
  height: 16px;
  border-radius: 8px;
  background: var(--box);
  color: var(--icon);
  font: 10px/16px "DejaVu Sans Mono", monospace;
}
.routes button:last-child { grid-column: 1 / -1; justify-self: center; width: 58px; }
.routes [aria-pressed] { color: var(--amber); }

/* Modulators */
.mods { gap: 4px; }
.mod {
  position: relative;
  display: grid;
  grid-template-columns: 59px minmax(0, 1fr);
  margin-left: 3px;
  border-radius: 4px;
  background: var(--panel);
}
.env { flex: 1 1 194px; }
.lfo { flex: 1 1 259px; }
.mod-tabs { display: grid; grid-auto-rows: 1fr; }
.mod-tabs button {
  position: relative;
  display: flex;
  justify-content: center;
  padding-top: 2px;
  border-top: 1px solid #222629;
  background: var(--box);
  white-space: nowrap;
}
.mod-tabs button.is-active { background: none; border-color: transparent; }
.amount { position: absolute; left: 6px; bottom: 5px; width: 15px; height: 15px; }
.activity { position: absolute; left: -2px; top: 37px; width: 2px; height: 10px; background: #2ed39c; }
.mod-body { display: flex; flex-direction: column; padding: 5px 5px 4px 4px; min-width: 0; }
.mod-body > .screen { flex: 1; }
.ticks { font-size: 7px; fill: #3e4245; }
.knob-row { display: grid; gap: 5px; padding-top: 6px; }
.six { grid-template-columns: repeat(6, 1fr); }
.knob-row .knob { gap: 2px; }
.lfo-tools { display: grid; grid-template-columns: 82px 63px 28px 1fr; column-gap: 5px; height: 24px; align-items: start; }
.tool { height: 20px; border-radius: 8px; background: var(--box); }
.brush { padding: 0 5px; }
.brush svg { width: 72px; height: 16px; }
.grid-size { display: flex; justify-content: space-around; padding: 0 6px; font: 400 13px/20px Lato, sans-serif; }
.smooth-btn svg { width: 20px; height: 18px; margin: 0 0 0 4px; }
.lfo .hslider { margin: 4px 0; }
.lfo-foot { display: grid; grid-template-columns: 107px 107px 1fr 1fr 1fr; column-gap: 5px; }
.tile {
  height: 56px;
  display: flex;
  flex-direction: column;
  overflow: hidden;
  border-radius: 8px;
  background: var(--box);
  text-align: center;
}
.tile span { flex: 1; align-self: stretch; display: flex; align-items: center; justify-content: center; font-size: 13px; white-space: nowrap; }
.tile small { align-self: stretch; background: var(--cap); font-size: 10px; line-height: 16px; }
.split span { justify-content: space-between; padding: 0 10px 0 4px; }
.beat span { padding-left: 26px; }
.clock { width: 15px; height: 15px; }
.note { width: 10px; height: 20px; }
.slope { width: 26px; height: 26px; }
.split-row { display: grid; grid-template-columns: 289fr 247fr; gap: 4px; }
.random { height: 129px; }
.random .mod-body { gap: 5px; }
.two { display: grid; grid-template-columns: 1fr 1fr; gap: 4px; }
.pill {
  height: 17px;
  border-radius: 8px;
  background: var(--box);
  color: var(--icon);
  font: 10px/17px "DejaVu Sans Mono", monospace;
}
.trace { background: linear-gradient(transparent 49%, #33373a 49%, #33373a 52%, transparent 52%), var(--screen); }
.sources { display: grid; grid-template-columns: repeat(4, 1fr); gap: 1px 4px; margin-left: 3px; }
.sources button { display: flex; justify-content: center; padding-top: 2px; border-radius: 4px; background: var(--box); white-space: nowrap; }
.panel { display: grid; gap: 5px; height: 64px; padding: 5px 4px 4px; border-radius: 4px; background: var(--panel); }
.panel .tile { height: auto; }
.panel .knob { gap: 2px; }
.voices { grid-template-columns: 57px 57px 1fr 1fr; }
.glide { grid-template-columns: 71px 71px 1fr; gap: 4px; }
.stack { display: grid; gap: 2px; }

/* Keyboard */
.keyboard { grid-column: 1 / -1; display: flex; border-radius: 4px 4px 0 0; overflow: hidden; background: var(--panel); }
.slot { position: relative; flex: 1; display: flex; }
.white { flex: 1; border-right: 1px solid #35383b; }
.black { position: absolute; z-index: 1; left: 53%; top: 0; width: 12px; height: 22px; border-radius: 0 0 4px 4px; background: #24282b; }
.black.held { background: #a585f7; }
```
